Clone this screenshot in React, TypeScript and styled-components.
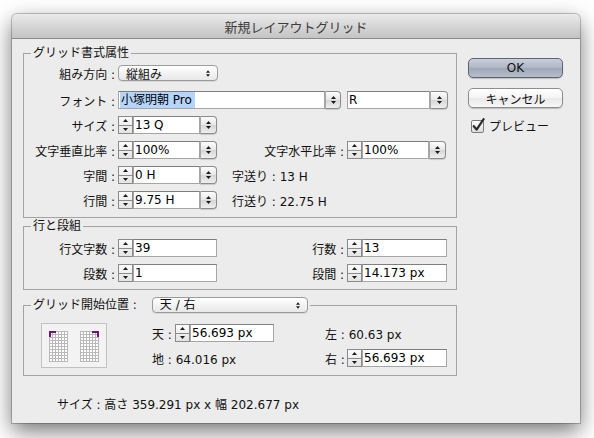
import React from "react";
import styled, { createGlobalStyle } from "styled-components";

const GlobalStyle = createGlobalStyle`
  html, body {
    margin: 0;
    background: #ffffff;
  }
  body {
    font-family: "DejaVu Sans", "Noto Sans CJK JP", sans-serif;
    font-size: 12px;
    color: #111;
  }
`;

const Page = styled.div`
  width: 594px;
  height: 438px;
  box-sizing: border-box;
  padding: 14px 14px 0 12px;
  overflow: hidden;
`;

const Window = styled.div`
  width: 568px;
  height: 409px;
  background: #ececec;
  border-radius: 5px 5px 0 0;
  box-shadow: 0 8px 22px rgba(0, 0, 0, 0.55), 0 0 0 1px rgba(0, 0, 0, 0.22);
  display: flex;
  flex-direction: column;
  overflow: hidden;
`;

const TitleBar = styled.div`
  flex: none;
  height: 23px;
  border-bottom: 1px solid #8a8a8a;
  background: linear-gradient(#ebebeb, #d2d2d2 60%, #c4c4c4);
  border-radius: 5px 5px 0 0;
  display: flex;
  align-items: center;
  justify-content: center;
  font-family: "Noto Sans CJK JP", sans-serif;
  font-size: 13px;
  color: #3c3c3c;
  padding-top: 1px;
`;

const Body = styled.div`
  display: flex;
  gap: 11px;
  padding: 0 17px 0 11px;
`;

const LeftColumn = styled.div`
  width: 434px;
  display: flex;
  flex-direction: column;
`;

const RightColumn = styled.div`
  width: 95px;
  padding-top: 19px;
  display: flex;
  flex-direction: column;
`;

const Group = styled.fieldset<{ $top: number; $pt: number; $pb: number }>`
  margin: ${(p) => p.$top}px 0 0 0;
  padding: ${(p) => p.$pt}px 0 ${(p) => p.$pb}px 0;
  border: 1px solid #a3a3a3;
  min-width: 0;
`;

const Legend = styled.legend<{ $h?: number }>`
  margin-left: 7px;
  padding: 0 2px;
  height: ${(p) => p.$h ?? 14}px;
  line-height: ${(p) => p.$h ?? 14}px;
  font-size: 12px;
  color: #111;
  display: flex;
  align-items: center;
  gap: 15px;
`;

const FormGrid = styled.div<{ $rows: string }>`
  display: grid;
  grid-template-columns: 91px 111px 112px 101px;
  grid-template-rows: ${(p) => p.$rows};
  column-gap: 3px;
  row-gap: 5px;
  align-items: start;
`;

const Cell = styled.div<{ $align?: "left" | "right"; $span?: number }>`
  height: 20px;
  display: flex;
  align-items: center;
  justify-content: ${(p) => (p.$align === "right" ? "flex-end" : "flex-start")};
  grid-column: span ${(p) => p.$span ?? 1};
  white-space: nowrap;
  font-size: 12px;
  color: #111;
`;

const Control = styled.div`
  display: flex;
  align-items: center;
`;

const TextField = styled.div<{ $w: number }>`
  width: ${(p) => p.$w}px;
  height: 18px;
  box-sizing: border-box;
  background: #fff;
  border: 1px solid #a6a6a6;
  border-top-color: #7e7e7e;
  display: flex;
  align-items: center;
  padding-left: 1px;
  font-size: 12px;
  color: #000;
  white-space: nowrap;
  overflow: hidden;
`;

const Selected = styled.span`
  background: #b5d5ff;
  height: 16px;
  line-height: 16px;
  padding: 0 3px 0 1px;
`;

const SpinBox = styled.div`
  width: 15px;
  height: 18px;
  box-sizing: border-box;
  border: 1px solid #8a8a8a;
  background: linear-gradient(#fbfbfb, #e4e4e4);
  display: flex;
  flex-direction: column;
`;

const SpinHalf = styled.div<{ $down?: boolean }>`
  flex: 1;
  display: flex;
  align-items: center;
  justify-content: center;
  border-top: ${(p) => (p.$down ? "1px solid #8a8a8a" : "none")};
`;

const ArrowButton = styled.div<{ $w?: number }>`
  width: ${(p) => p.$w ?? 17}px;
  height: 18px;
  box-sizing: border-box;
  border: 1px solid #8c8c8c;
  border-left-color: #a8a8a8;
  border-radius: 0 4px 4px 0;
  background: linear-gradient(#fdfdfd, #e6e6e6 50%, #d6d6d6 52%, #efefef);
  box-shadow: 0 1px 1px rgba(0, 0, 0, 0.15);
  display: flex;
  flex-direction: column;
  align-items: center;
  justify-content: center;
  gap: 2px;
`;

const PopupButton = styled.div<{ $w: number }>`
  width: ${(p) => p.$w}px;
  height: 16px;
  box-sizing: border-box;
  border: 1px solid #9b9b9b;
  border-radius: 4px;
  background: linear-gradient(#ffffff, #f3f3f3 50%, #e8e8e8);
  box-shadow: 0 1px 0 rgba(0, 0, 0, 0.08);
  display: flex;
  align-items: center;
  justify-content: space-between;
  padding: 0 7px 0 7px;
  font-size: 12px;
  color: #111;
`;

const PopupArrows = styled.div`
  display: flex;
  flex-direction: column;
  gap: 1px;
`;

const GridBody = styled.div`
  display: flex;
  padding-left: 17px;
  gap: 45px;
`;

const IconBox = styled.div`
  width: 66px;
  height: 45px;
  margin-top: 1px;
  box-sizing: border-box;
  border: 1px solid #c2c2c2;
  background: #f3f3f3;
`;

const PosGrid = styled.div`
  display: grid;
  grid-template-columns: 23px 99px 51px 22px 100px;
  grid-template-rows: 20px 20px;
  row-gap: 5px;
  padding-top: 1px;
`;

const Summary = styled.div`
  margin-top: 22px;
  padding-left: 34px;
  height: 14px;
  line-height: 14px;
  font-size: 12px;
  color: #111;
`;

const PushButton = styled.div<{ $default?: boolean }>`
  height: 20px;
  box-sizing: border-box;
  border-radius: 5px;
  border: 1px solid ${(p) => (p.$default ? "#5d6473" : "#8d8d8d")};
  background: ${(p) =>
    p.$default
      ? "linear-gradient(#c9cfd9, #aeb6c4 50%, #9ea7b6 52%, #b7bfcc)"
      : "linear-gradient(#ffffff, #f4f4f4 50%, #e9e9e9 52%, #f7f7f7)"};
  box-shadow: 0 1px 1px rgba(0, 0, 0, 0.2);
  display: flex;
  align-items: center;
  justify-content: center;
  font-size: 12px;
  color: #111;
  margin-bottom: 10px;
`;

const CheckRow = styled.div`
  display: flex;
  align-items: center;
  gap: 3px;
  margin-top: -1px;
  padding-left: 3px;
  height: 16px;
  font-size: 12px;
  color: #111;
`;

const Tri = ({ down, w = 5 }: { down?: boolean; w?: number }) => (
  <svg width={w} height={3} viewBox="0 0 5 3" style={{ display: "block" }}>
    <path d={down ? "M0 0H5L2.5 3Z" : "M2.5 0L5 3H0Z"} fill="#1a1a1a" />
  </svg>
);

const Spinner = () => (
  <SpinBox>
    <SpinHalf>
      <Tri />
    </SpinHalf>
    <SpinHalf $down>
      <Tri down />
    </SpinHalf>
  </SpinBox>
);

const Arrows = ({ w }: { w?: number }) => (
  <ArrowButton $w={w}>
    <Tri />
    <Tri down />
  </ArrowButton>
);

const Popup = ({ w, children }: { w: number; children: React.ReactNode }) => (
  <PopupButton $w={w}>
    <span>{children}</span>
    <PopupArrows>
      <Tri w={4} />
      <Tri w={4} down />
    </PopupArrows>
  </PopupButton>
);

const NumberField = ({
  value,
  width,
  combo,
}: {
  value: string;
  width: number;
  combo?: boolean;
}) => (
  <Control>
    <Spinner />
    <TextField $w={width}>{value}</TextField>
    {combo && <Arrows />}
  </Control>
);

const GridPage = ({ x, corner }: { x: number; corner: "left" | "right" }) => {
  const lines = [];
  for (let i = 0; i <= 6; i++) {
    lines.push(<line key={"v" + i} x1={x + i * 3 + 0.5} y1={7} x2={x + i * 3 + 0.5} y2={38} />);
  }
  for (let j = 0; j <= 10; j++) {
    lines.push(<line key={"h" + j} x1={x} y1={7 + j * 3 + 0.5} x2={x + 19} y2={7 + j * 3 + 0.5} />);
  }
  const mark =
    corner === "left"
      ? `M${x} 7H${x + 7}V9H${x + 2}V13H${x}Z`
      : `M${x + 12} 7H${x + 19}V13H${x + 17}V9H${x + 12}Z`;
  return (
    <g>
      <rect x={x} y={7} width={19} height={31} fill="#fff" />
      <g stroke="#b9b9b9" strokeWidth={1}>{lines}</g>
      <path d={mark} fill="#6c1677" />
    </g>
  );
};

const GridIcon = () => (
  <IconBox>
    <svg width={64} height={43} style={{ display: "block" }}>
      <GridPage x={7} corner="left" />
      <GridPage x={38} corner="right" />
    </svg>
  </IconBox>
);

const CheckBox = () => (
  <svg width={15} height={15} viewBox="0 0 15 15" style={{ display: "block" }}>
    <defs>
      <linearGradient id="cb" x1="0" y1="0" x2="0" y2="1">
        <stop offset="0" stopColor="#ffffff" />
        <stop offset="1" stopColor="#dcdcdc" />
      </linearGradient>
    </defs>
    <rect x={0.5} y={2.5} width={12} height={12} rx={1.5} fill="url(#cb)" stroke="#7b7b7b" />
    <path d="M2.8 8.2L5.6 11.6L12.6 1.2" fill="none" stroke="#2a2a2a" strokeWidth={2.2} strokeLinecap="round" strokeLinejoin="round" />
  </svg>
);

export default function App() {
  return (
    <>
      <GlobalStyle />
      <Page>
        <Window>
          <TitleBar>新規レイアウトグリッド</TitleBar>
          <Body>
            <LeftColumn>
              <Group $top={7} $pt={3} $pb={7}>
                <Legend>グリッド書式属性</Legend>
                <FormGrid $rows="22px repeat(5, 20px)">
                  <Cell $align="right">組み方向 :</Cell>
                  <Cell>
                    <Popup w={100}>縦組み</Popup>
                  </Cell>
                  <Cell />
                  <Cell />

                  <Cell $align="right">フォント :</Cell>
                  <Cell $span={2}>
                    <Control>
                      <TextField $w={207}>
                        <Selected>小塚明朝 Pro</Selected>
                      </TextField>
                      <Arrows w={16} />
                    </Control>
                  </Cell>
                  <Cell>
                    <Control>
                      <TextField $w={83}>R</TextField>
                      <Arrows w={18} />
                    </Control>
                  </Cell>

                  <Cell $align="right">サイズ :</Cell>
                  <Cell>
                    <NumberField value="13 Q" width={67} combo />
                  </Cell>
                  <Cell />
                  <Cell />

                  <Cell $align="right">文字垂直比率 :</Cell>
                  <Cell>
                    <NumberField value="100%" width={67} combo />
                  </Cell>
                  <Cell $align="right">文字水平比率 :</Cell>
                  <Cell>
                    <NumberField value="100%" width={67} combo />
                  </Cell>

                  <Cell $align="right">字間 :</Cell>
                  <Cell>
                    <NumberField value="0 H" width={67} combo />
                  </Cell>
                  <Cell>字送り : 13 H</Cell>
                  <Cell />

                  <Cell $align="right">行間 :</Cell>
                  <Cell>
                    <NumberField value="9.75 H" width={67} combo />
                  </Cell>
                  <Cell>行送り : 22.75 H</Cell>
                  <Cell />
                </FormGrid>
              </Group>

              <Group $top={1} $pt={5} $pb={6}>
                <Legend>行と段組</Legend>
                <FormGrid $rows="20px 20px">
                  <Cell $align="right">行文字数 :</Cell>
                  <Cell>
                    <NumberField value="39" width={84} />
                  </Cell>
                  <Cell $align="right">行数 :</Cell>
                  <Cell>
                    <NumberField value="13" width={85} />
                  </Cell>

                  <Cell $align="right">段数 :</Cell>
                  <Cell>
                    <NumberField value="1" width={84} />
                  </Cell>
                  <Cell $align="right">段間 :</Cell>
                  <Cell>
                    <NumberField value="14.173 px" width={85} />
                  </Cell>
                </FormGrid>
              </Group>

              <Group $top={7} $pt={9} $pb={7}>
                <Legend $h={16}>
                  <span>グリッド開始位置 :</span>
                  <Popup w={156}>天 / 右</Popup>
                </Legend>
                <GridBody>
                  <GridIcon />
                  <PosGrid>
                    <Cell>天 :</Cell>
                    <Cell>
                      <NumberField value="56.693 px" width={84} />
                    </Cell>
                    <Cell />
                    <Cell $span={2}>左 : 60.63 px</Cell>

                    <Cell $span={2}>地 : 64.016 px</Cell>
                    <Cell />
                    <Cell>右 :</Cell>
                    <Cell>
                      <NumberField value="56.693 px" width={85} />
                    </Cell>
                  </PosGrid>
                </GridBody>
              </Group>

              <Summary>サイズ : 高さ 359.291 px x 幅 202.677 px</Summary>
            </LeftColumn>

            <RightColumn>
              <PushButton $default>OK</PushButton>
              <PushButton>キャンセル</PushButton>
              <CheckRow>
                <CheckBox />
                <span>プレビュー</span>
              </CheckRow>
            </RightColumn>
          </Body>
        </Window>
      </Page>
    </>
  );
}
